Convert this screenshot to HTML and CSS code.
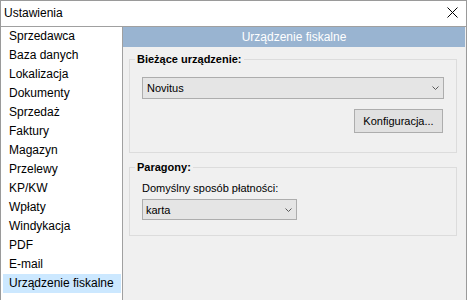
FILE: index.html
```html
<!DOCTYPE html>
<html lang="pl">
<head>
<meta charset="utf-8">
<title>Ustawienia</title>
<link rel="stylesheet" href="styles.css">
</head>
<body>
<div class="window">
  <div class="titlebar">
    <span class="title">Ustawienia</span>
    <svg class="close" width="11" height="11" viewBox="0 0 11 11"><path d="M0.5 0.5 L10.5 10.5 M10.5 0.5 L0.5 10.5" stroke="#000" stroke-width="1" fill="none"/></svg>
  </div>
  <div class="body">
    <ul class="nav">
      <li>Sprzedawca</li>
      <li>Baza danych</li>
      <li>Lokalizacja</li>
      <li>Dokumenty</li>
      <li>Sprzedaż</li>
      <li>Faktury</li>
      <li>Magazyn</li>
      <li>Przelewy</li>
      <li>KP/KW</li>
      <li>Wpłaty</li>
      <li>Windykacja</li>
      <li>PDF</li>
      <li>E-mail</li>
      <li class="selected">Urządzenie fiskalne</li>
    </ul>
    <div class="panel">
      <div class="panel-header">Urządzenie fiskalne</div>
      <div class="panel-content">
        <fieldset class="group group-device">
          <legend>Bieżące urządzenie:</legend>
          <div class="combo combo-wide">
            <span class="combo-text">Novitus</span>
            <svg class="chev" width="7" height="4" viewBox="0 0 7 4"><path d="M0.5 0.5 L3.5 3.5 L6.5 0.5" stroke="#5a5a5a" stroke-width="1" fill="none"/></svg>
          </div>
          <div class="button-row">
            <div class="button">Konfiguracja...</div>
          </div>
        </fieldset>
        <fieldset class="group group-receipts">
          <legend>Paragony:</legend>
          <div class="field-label">Domyślny sposób płatności:</div>
          <div class="combo combo-narrow">
            <span class="combo-text">karta</span>
            <svg class="chev" width="7" height="4" viewBox="0 0 7 4"><path d="M0.5 0.5 L3.5 3.5 L6.5 0.5" stroke="#5a5a5a" stroke-width="1" fill="none"/></svg>
          </div>
        </fieldset>
      </div>
    </div>
  </div>
</div>
</body>
</html>
```

FILE: styles.css
```css
* { box-sizing: border-box; }
html, body { margin: 0; padding: 0; background: #ffffff; }
body {
  font-family: "Liberation Sans", Arial, sans-serif;
  color: #000;
}
.window {
  width: 467px;
  height: 300px;
  border: 1px solid #9a9a9a;
  border-bottom: none;
  display: flex;
  flex-direction: column;
  background: #fff;
  overflow: hidden;
}
.titlebar {
  height: 26px;
  flex: none;
  display: flex;
  align-items: center;
  justify-content: space-between;
  padding: 0 8px 2px 3px;
  border-bottom: 1px solid #a0a0a0;
  font-size: 12px;
}
.close { display: block; }
.body {
  flex: 1;
  display: flex;
  min-height: 0;
}
.nav {
  list-style: none;
  margin: 0;
  padding: 0 1px 0 2px;
  width: 122px;
  flex: none;
  border-right: 1px solid #a0a0a0;
  background: #fff;
  font-size: 12px;
}
.nav li {
  height: 19px;
  line-height: 19px;
  padding-left: 6px;
  white-space: nowrap;
}
.nav li.selected { background: #cce8ff; }
.panel {
  flex: 1;
  display: flex;
  flex-direction: column;
  background: #f0f0f0;
  border-right: 1px solid #6e6e6e;
  margin-right: -1px;
}
.panel-header {
  height: 20px;
  line-height: 20px;
  background: #99b4d1;
  color: #fff;
  text-align: center;
  font-size: 12px;
  margin-right: 1px;
}
.panel-content {
  flex: 1;
  padding: 5px 9px 0 6px;
  font-size: 11px;
}
.group {
  margin: 0;
  border: 1px solid #dcdcdc;
  padding: 0 12px 19px 12px;
  min-width: 0;
}
.group legend {
  font-weight: bold;
  font-size: 11px;
  line-height: 14px;
  padding: 0 2px;
  margin-left: -7px;
}
.group-receipts {
  margin-top: 7px;
  padding-bottom: 15px;
}
.combo {
  display: flex;
  align-items: center;
  justify-content: space-between;
  border: 1px solid #adadad;
  background: #e5e5e5;
  padding: 0 4px 0 4px;
}
.combo-wide {
  margin-top: 11px;
  height: 22px;
}
.combo-narrow {
  margin-top: 4px;
  height: 21px;
  width: 155px;
  padding-left: 3px;
}
.chev { display: block; }
.button-row {
  display: flex;
  justify-content: flex-end;
  margin-top: 10px;
  padding-right: 1px;
}
.button {
  width: 89px;
  height: 24px;
  line-height: 22px;
  text-align: center;
  border: 1px solid #adadad;
  background: #e1e1e1;
}
.field-label {
  margin-top: 7px;
  line-height: 14px;
}
```
